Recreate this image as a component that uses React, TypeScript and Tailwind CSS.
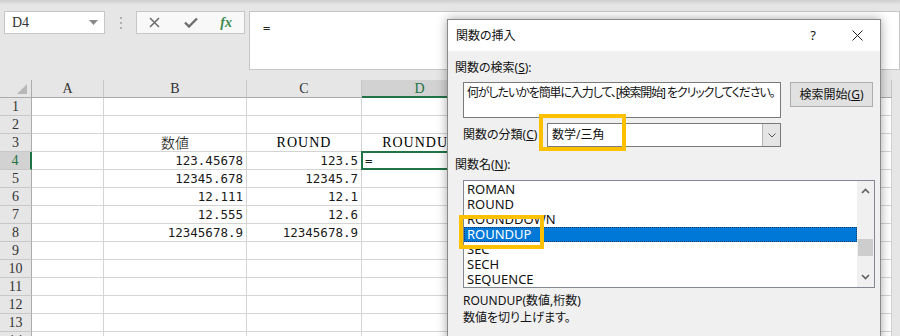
import React from "react";

// Excel sheet with the 関数の挿入 dialog on top

const ROWGRID = "grid grid-cols-[32px_72px_143px_115px_116px_138px_138px_138px]";
const UI = "font-['Noto_Sans','Noto_Sans_CJK_JP',sans-serif] [font-feature-settings:'palt']";
const SERIF = "font-['Liberation_Serif','DejaVu_Serif',serif]";

type Row = { n: number; cells: string[]; head?: boolean };

const rows: Row[] = [
  { n: 1, cells: [] },
  { n: 2, cells: [] },
  { n: 3, cells: ["", "数値", "ROUND", "ROUNDUP"], head: true },
  { n: 4, cells: ["", "123.45678", "123.5", "="] },
  { n: 5, cells: ["", "12345.678", "12345.7"] },
  { n: 6, cells: ["", "12.111", "12.1"] },
  { n: 7, cells: ["", "12.555", "12.6"] },
  { n: 8, cells: ["", "12345678.9", "12345678.9"] },
  { n: 9, cells: [] },
  { n: 10, cells: [] },
  { n: 11, cells: [] },
  { n: 12, cells: [] },
  { n: 13, cells: [] },
  { n: 14, cells: [] },
];

// E..G sit under the dialog, their letters never show
const colLetters = ["A", "B", "C", "D", "", "", ""];

function Chevron({ up }: { up?: boolean }) {
  return (
    <svg width="9" height="6" viewBox="0 0 9 6">
      <path
        d={up ? "M1 5 L4.5 1.5 L8 5" : "M1 1 L4.5 4.5 L8 1"}
        fill="none"
        stroke="#606060"
        strokeWidth="1.6"
      />
    </svg>
  );
}

function Cell({ row, col, text }: { row: Row; col: number; text?: string }) {
  const active = row.n === 4 && col === 3;
  if (row.head) {
    const latin = col === 2 || col === 3;
    return (
      <div className="h-[18px] bg-white border-r border-b border-[#d4d4d4] flex items-end justify-center overflow-visible whitespace-nowrap">
        {text && (
          <span
            className={
              latin
                ? SERIF + " text-[14px] tracking-[1px] leading-[16px] text-black"
                : "font-['Noto_Sans_CJK_JP',sans-serif] font-light text-[14px] leading-[17px] text-black"
            }
          >
            {text}
          </span>
        )}
      </div>
    );
  }
  return (
    <div
      className={
        "relative h-[18px] bg-white border-r border-b border-[#d4d4d4] flex items-end whitespace-nowrap " +
        (active ? "justify-start pl-[3px]" : "justify-end pr-[3px]")
      }
    >
      {text && (
        <span className="font-['DejaVu_Sans_Mono',monospace] text-[12.5px] leading-[16px] text-[#1a1a1a]">
          {text}
        </span>
      )}
      {active && (
        <div className="absolute -left-[1px] -top-[1px] right-0 bottom-[-1px] border-2 border-[#217346]" />
      )}
    </div>
  );
}

export default function App() {
  return (
    <div className="relative w-[900px] h-[336px] overflow-hidden bg-[#e6e6e6]">
      {/* ribbon edge + formula bar */}
      <div className="h-[80px]">
        <div className="h-[5px] bg-gradient-to-b from-[#cfcfcf] to-[#e6e6e6]" />
        <div className="flex items-start pt-[6px]">
          <div className="ml-[4px] w-[101px] h-[23px] bg-white border border-[#c6c6c6] flex items-center pl-[7px] pr-[6px]">
            <span className={"flex-1 text-[14px] text-[#333] " + SERIF}>D4</span>
            <svg width="9" height="5" viewBox="0 0 9 5">
              <path d="M0 0 H9 L4.5 5 Z" fill="#8a8a8a" />
            </svg>
          </div>
          <div className="w-[31px] h-[23px] flex flex-col items-center justify-center gap-[3px]">
            <div className="w-[2px] h-[2px] bg-[#b0b0b0]" />
            <div className="w-[2px] h-[2px] bg-[#b0b0b0]" />
            <div className="w-[2px] h-[2px] bg-[#b0b0b0]" />
          </div>
          <div className="w-[109px] h-[23px] bg-[#f8f8f8] border border-[#c6c6c6] flex items-center">
            <div className="w-[36px] flex justify-center">
              <svg width="11" height="11" viewBox="0 0 11 11">
                <path d="M1 1 L10 10 M10 1 L1 10" stroke="#6e6e6e" strokeWidth="1.6" />
              </svg>
            </div>
            <div className="w-[36px] flex justify-center">
              <svg width="14" height="11" viewBox="0 0 14 11">
                <path d="M1 5.5 L5 9.5 L13 1.5" fill="none" stroke="#6e6e6e" strokeWidth="2.4" />
              </svg>
            </div>
            <div className="w-[36px] flex justify-center">
              <span className={"italic font-bold text-[14px] leading-[14px] text-[#3c8a4e] " + SERIF}>fx</span>
            </div>
          </div>
          <div className="ml-[4px] flex-1 h-[59px] bg-white border border-[#c6c6c6] pl-[13px] pt-[2px]">
            <span className="font-['DejaVu_Sans_Mono',monospace] text-[12px] text-[#222]">=</span>
          </div>
        </div>
      </div>

      {/* column headers */}
      <div className={ROWGRID + " h-[18px]"}>
        <div className="h-[18px] bg-[#e6e6e6] border-r border-b border-[#ababab] flex items-end justify-end pr-[4px] pb-[3px]">
          <svg width="10" height="10" viewBox="0 0 10 10">
            <path d="M10 0 V10 H0 Z" fill="#b8b8b8" />
          </svg>
        </div>
        {colLetters.map((c, i) => (
          <div
            key={i}
            className={
              "h-[18px] border-r flex items-center justify-center text-[14px] " +
              SERIF +
              " " +
              (c === "D"
                ? "bg-[#d2d2d2] border-[#c6c6c6] border-b-2 border-b-[#217346] text-[#217346]"
                : "bg-[#e6e6e6] border-[#c6c6c6] border-b border-b-[#ababab] text-[#333]")
            }
          >
            {c}
          </div>
        ))}
      </div>

      {/* rows */}
      {rows.map((r) => (
        <div key={r.n} className={ROWGRID}>
          <div
            className={
              "h-[18px] border-b border-[#c8c8c8] flex items-center justify-center text-[14px] " +
              SERIF +
              " " +
              (r.n === 4
                ? "bg-[#d2d2d2] border-r-2 border-r-[#217346] text-[#217346]"
                : "bg-[#e6e6e6] border-r border-r-[#ababab] text-[#333]")
            }
          >
            {r.n}
          </div>
          {colLetters.map((_, i) => (
            <Cell key={i} row={r} col={i} text={r.cells[i]} />
          ))}
        </div>
      ))}

      {/* 関数の挿入 dialog */}
      <div
        className={
          "absolute left-[447px] top-[19px] w-[434px] h-[330px] bg-[#f0f0f0] border border-[#8a8a8a] shadow-[0_0_10px_rgba(0,0,0,0.35)] text-[12px] text-[#111] " +
          UI
        }
      >
        <div className="h-[31px] bg-white flex items-center pl-[8px]">
          <span className="flex-1">関数の挿入</span>
          <div className="w-[42px] flex justify-center text-[13px]">?</div>
          <div className="w-[46px] flex justify-center">
            <svg width="11" height="11" viewBox="0 0 11 11">
              <path d="M0.5 0.5 L10.5 10.5 M10.5 0.5 L0.5 10.5" stroke="#222" strokeWidth="1" />
            </svg>
          </div>
        </div>

        <div className="px-[7px]">
          <div className="mt-[9px] h-[16px] leading-[16px]">
            関数の検索(<span className="underline">S</span>):
          </div>

          <div className="mt-[6px] flex items-start pl-[8px]">
            <div className="w-[318px] h-[36px] bg-white border border-[#7a7a7a] pl-[3px] pt-[1px] leading-[17px] whitespace-nowrap overflow-hidden tracking-[-1.1px]">
              何がしたいかを簡単に入力して、[検索開始] をクリックしてください。
            </div>
            <div className="ml-[9px] w-[83px] h-[25px] bg-[#e1e1e1] border border-[#adadad] flex items-center justify-center">
              検索開始(<span className="underline">G</span>)
            </div>
          </div>

          <div className="mt-[5px] h-[24px] flex items-center pl-[8px]">
            <div className="w-[84px]">
              関数の分類(<span className="underline">C</span>)
            </div>
            <div className="w-[234px] h-[24px] bg-white border border-[#7a7a7a] flex">
              <div className="flex-1 flex items-center pl-[4px]">数学/三角</div>
              <div className="w-[18px] bg-[#e5e5e5] border-l border-[#b5b5b5] flex items-center justify-center">
                <svg width="8" height="5" viewBox="0 0 8 5">
                  <path d="M0.5 0.5 L4 4 L7.5 0.5" fill="none" stroke="#555" strokeWidth="1" />
                </svg>
              </div>
            </div>
          </div>

          <div className="mt-[10px] h-[16px] leading-[16px]">
            関数名(<span className="underline">N</span>):
          </div>

          <div className="mt-[7px] ml-[8px] w-[412px] h-[108px] bg-white border border-[#828790] flex">
            <div className="flex-1 pt-[1px] overflow-hidden text-[13px]">
              {["ROMAN", "ROUND", "ROUNDDOWN", "ROUNDUP", "SEC", "SECH", "SEQUENCE"].map((f) => (
                <div
                  key={f}
                  className={
                    "h-[15px] leading-[15px] pl-[3px] " +
                    (f === "ROUNDUP"
                      ? "bg-[#0078d7] text-white outline outline-1 outline-dotted outline-[#1a3b66] -outline-offset-1"
                      : "text-[#111]")
                  }
                >
                  {f}
                </div>
              ))}
            </div>
            <div className="w-[17px] bg-[#f0f0f0] flex flex-col">
              <div className="h-[20px] flex items-center justify-center">
                <Chevron up />
              </div>
              <div className="h-[38px]" />
              <div className="h-[17px] mx-[1px] bg-[#cdcdcd]" />
              <div className="flex-1" />
              <div className="h-[20px] flex items-center justify-center">
                <Chevron />
              </div>
            </div>
          </div>

          <div className="mt-[5px] pl-[8px] h-[16px] leading-[16px]">ROUNDUP(数値,桁数)</div>
          <div className="pl-[8px] h-[17px] leading-[17px]">数値を切り上げます。</div>
        </div>

        {/* highlight boxes */}
        <div className="absolute left-[91px] top-[94px] w-[87px] h-[37px] border-4 border-[#ffc000]" />
        <div className="absolute left-[11px] top-[195px] w-[85px] h-[34px] border-4 border-[#ffc000]" />
      </div>
    </div>
  );
}
